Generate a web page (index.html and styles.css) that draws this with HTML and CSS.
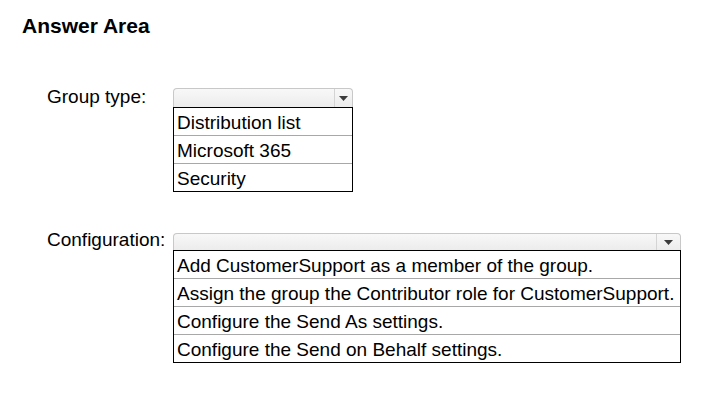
FILE: index.html
```html
<!DOCTYPE html>
<html lang="en">
<head>
<meta charset="utf-8">
<title>Answer Area</title>
<link rel="stylesheet" href="styles.css">
</head>
<body>
<main class="answer-area">
  <h1 class="title">Answer Area</h1>

  <section class="field field-group">
    <div class="label">Group type:</div>
    <div class="dropdown dropdown-group">
      <div class="select">
        <span class="select-value"></span>
        <span class="select-arrow"><svg width="9" height="5" viewBox="0 0 9 5"><path d="M0 0H9L4.5 5Z" fill="#3c3c3c"/></svg></span>
      </div>
      <ul class="options">
        <li>Distribution list</li>
        <li>Microsoft 365</li>
        <li>Security</li>
      </ul>
    </div>
  </section>

  <section class="field field-config">
    <div class="label">Configuration:</div>
    <div class="dropdown dropdown-config">
      <div class="select">
        <span class="select-value"></span>
        <span class="select-arrow"><svg width="9" height="5" viewBox="0 0 9 5"><path d="M0 0H9L4.5 5Z" fill="#3c3c3c"/></svg></span>
      </div>
      <ul class="options">
        <li>Add CustomerSupport as a member of the group.</li>
        <li>Assign the group the Contributor role for CustomerSupport.</li>
        <li>Configure the Send As settings.</li>
        <li>Configure the Send on Behalf settings.</li>
      </ul>
    </div>
  </section>
</main>
</body>
</html>
```

FILE: styles.css
```css
html, body {
  margin: 0;
  padding: 0;
  background: #ffffff;
}

body {
  font-family: "Liberation Sans", Arial, sans-serif;
  color: #000000;
}

.answer-area {
  padding-top: 14px;
}

.title {
  margin: 0 0 0 22px;
  font-size: 21px;
  line-height: 24px;
  font-weight: bold;
}

.field {
  display: flex;
  align-items: flex-start;
  padding-left: 47px;
}

.field-group {
  margin-top: 49px;
}

.field-config {
  margin-top: 38px;
}

.label {
  width: 126px;
  font-size: 19px;
  line-height: 19px;
}

.dropdown-group {
  width: 180px;
  margin-top: 1px;
}

.dropdown-config {
  width: 508px;
  margin-top: 3px;
}

.select {
  display: flex;
  box-sizing: border-box;
  border: 1px solid #c8c8c8;
  border-bottom: none;
  border-radius: 4px 4px 0 0;
  background: linear-gradient(#f8f8f8, #ececec);
}

.dropdown-group .select {
  height: 19px;
}

.dropdown-config .select {
  height: 17px;
}

.select-value {
  flex: 1;
}

.select-arrow {
  display: flex;
  align-items: center;
  justify-content: center;
  border-left: 1px solid #d4d4d4;
}

.dropdown-group .select-arrow {
  width: 17px;
}

.dropdown-config .select-arrow {
  width: 23px;
}

.options {
  margin: 0;
  padding: 0;
  list-style: none;
  border: 1px solid #000000;
  background: #ffffff;
}

.options li {
  padding: 2px 0 0 3px;
  font-size: 19px;
  line-height: 25px;
  white-space: nowrap;
}

.options li + li {
  border-top: 1px solid #a8a8a8;
}
```
